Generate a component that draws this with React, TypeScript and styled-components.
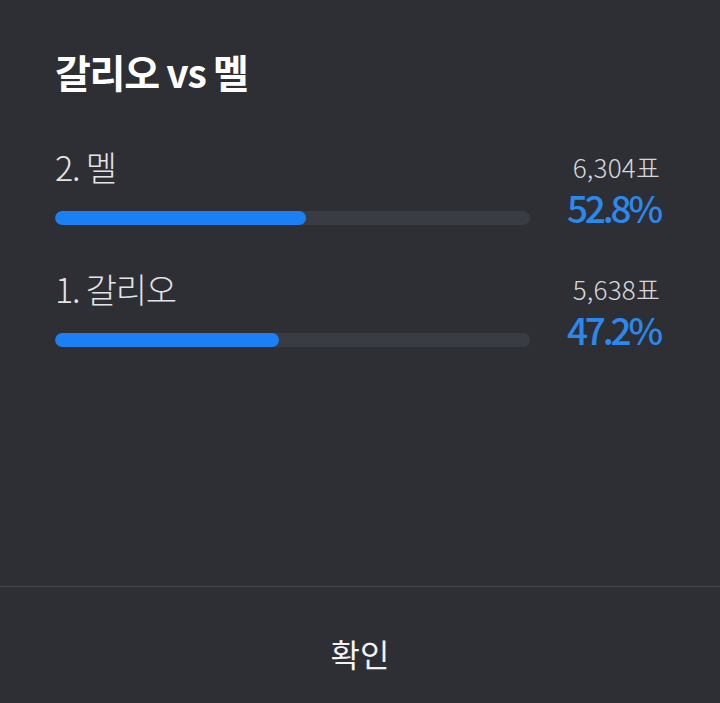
import React from 'react';
import styled, { createGlobalStyle } from 'styled-components';

const GlobalStyle = createGlobalStyle`
  html, body {
    margin: 0;
    padding: 0;
    background: #2e2f35;
  }
  body {
    font-family: "Noto Sans CJK KR", "Noto Sans", sans-serif;
  }
`;

interface Candidate {
  rank: number;
  name: string;
  votes: number;
}

const candidates: Candidate[] = [
  { rank: 2, name: '멜', votes: 6304 },
  { rank: 1, name: '갈리오', votes: 5638 },
];

const Sheet = styled.div`
  width: 720px;
  height: 703px;
  background: #2e2f35;
  display: flex;
  flex-direction: column;
  color: #fff;
`;

const Body = styled.div`
  flex: 1;
  padding: 46px 60px 0 55px;
  display: flex;
  flex-direction: column;
`;

const Title = styled.h1`
  margin: 0 0 51px;
  font-size: 39px;
  font-weight: 700;
  letter-spacing: -1.3px;
  line-height: 50px;
  color: #ffffff;
`;

const Option = styled.div`
  display: grid;
  grid-template-columns: 475px 1fr;
  grid-template-rows: 40px 41px;
  margin-bottom: 41px;
`;

const Label = styled.div`
  font-size: 34px;
  font-weight: 300;
  color: #e4e4e6;
  letter-spacing: -1.2px;
  line-height: 40px;
  white-space: nowrap;
`;

const Votes = styled.div`
  text-align: right;
  font-size: 26px;
  font-weight: 300;
  color: #d8d8da;
  letter-spacing: 0.2px;
  line-height: 40px;
  white-space: nowrap;
`;

const Track = styled.div`
  align-self: end;
  margin-bottom: 3px;
  height: 14px;
  border-radius: 7px;
  background: #3a3c44;
  overflow: hidden;
`;

const Fill = styled.div`
  height: 100%;
  border-radius: 7px;
  background: #1b80f3;
`;

const Percent = styled.div`
  text-align: right;
  font-size: 37px;
  font-weight: 500;
  color: #2b88ec;
  letter-spacing: -3.2px;
  line-height: 41px;
  white-space: nowrap;
`;

const Footer = styled.div`
  box-sizing: border-box;
  height: 117px;
  border-top: 1px solid #45464c;
  padding-top: 46px;
  display: flex;
  justify-content: center;
  align-items: flex-start;
`;

const Confirm = styled.button`
  background: none;
  border: none;
  padding: 0;
  color: #f2f2f2;
  font-family: inherit;
  font-size: 32px;
  font-weight: 400;
  line-height: 40px;
  cursor: pointer;
`;

export default function App() {
  const total = candidates.reduce((s, c) => s + c.votes, 0);
  return (
    <>
      <GlobalStyle />
      <Sheet>
        <Body>
          <Title>갈리오 vs 멜</Title>
          {candidates.map((c) => {
            const pct = (c.votes / total) * 100;
            return (
              <Option key={c.rank}>
                <Label>
                  {c.rank}. {c.name}
                </Label>
                <Votes>{c.votes.toLocaleString('en-US')}표</Votes>
                <Track>
                  <Fill style={{ width: `${pct}%` }} />
                </Track>
                <Percent>{pct.toFixed(1)}%</Percent>
              </Option>
            );
          })}
        </Body>
        <Footer>
          <Confirm>확인</Confirm>
        </Footer>
      </Sheet>
    </>
  );
}
